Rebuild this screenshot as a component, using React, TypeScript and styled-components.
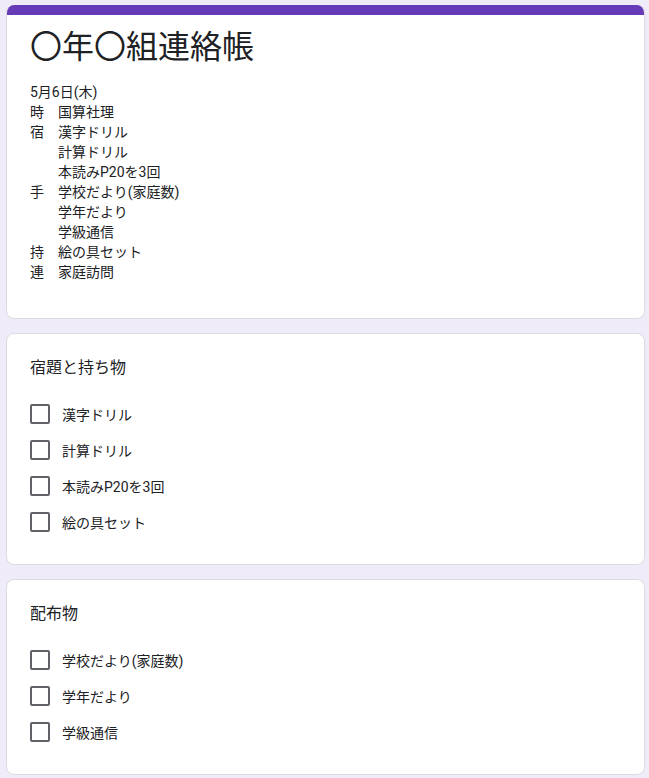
import React from "react";
import styled, { createGlobalStyle } from "styled-components";

const GlobalStyle = createGlobalStyle`
  html, body {
    margin: 0;
    padding: 0;
    background: #f0ebf8;
  }
  body {
    font-family: Roboto, "Noto Sans CJK JP", sans-serif;
    color: #202124;
  }
`;

const Page = styled.div`
  display: flex;
  flex-direction: column;
  gap: 14px;
  padding: 5px 4px 3px 6px;
`;

const Card = styled.div`
  background: #fff;
  border: 1px solid #dadce0;
  border-radius: 8px;
  overflow: hidden;
`;

const HeaderCard = styled(Card)`
  border-top: none;
`;

const TopBar = styled.div`
  height: 10px;
  background: #673ab7;
`;

const HeaderBody = styled.div`
  padding: 12px 24px 36px 23px;
`;

const Title = styled.h1`
  margin: 0;
  font-size: 32px;
  font-weight: 400;
  line-height: 40px;
`;

const Description = styled.div`
  margin-top: 15px;
  font-size: 14px;
  line-height: 20px;
  white-space: pre-wrap;
`;

const SectionBody = styled.div`
  padding: 22px 24px 24px 23px;
`;

const Heading = styled.div`
  font-size: 16px;
  line-height: 24px;
`;

const List = styled.div`
  margin-top: 16px;
  display: flex;
  flex-direction: column;
`;

const Row = styled.label`
  display: flex;
  align-items: center;
  gap: 12px;
  height: 36px;
  font-size: 14px;
`;

const CheckBox = styled.span`
  width: 16px;
  height: 16px;
  border: 2px solid #5f6368;
  border-radius: 2px;
  box-sizing: content-box;
  flex-shrink: 0;
`;

const description = [
  "5月6日(木)",
  "時　国算社理",
  "宿　漢字ドリル",
  "　　計算ドリル",
  "　　本読みP20を3回",
  "手　学校だより(家庭数)",
  "　　学年だより",
  "　　学級通信",
  "持　絵の具セット",
  "連　家庭訪問",
].join("\n");

const sections = [
  {
    title: "宿題と持ち物",
    items: ["漢字ドリル", "計算ドリル", "本読みP20を3回", "絵の具セット"],
  },
  {
    title: "配布物",
    items: ["学校だより(家庭数)", "学年だより", "学級通信"],
  },
];

export default function App() {
  return (
    <>
      <GlobalStyle />
      <Page>
        <HeaderCard>
          <TopBar />
          <HeaderBody>
            <Title>〇年〇組連絡帳</Title>
            <Description>{description}</Description>
          </HeaderBody>
        </HeaderCard>
        {sections.map((s) => (
          <Card key={s.title}>
            <SectionBody>
              <Heading>{s.title}</Heading>
              <List>
                {s.items.map((item) => (
                  <Row key={item}>
                    <CheckBox />
                    {item}
                  </Row>
                ))}
              </List>
            </SectionBody>
          </Card>
        ))}
      </Page>
    </>
  );
}
